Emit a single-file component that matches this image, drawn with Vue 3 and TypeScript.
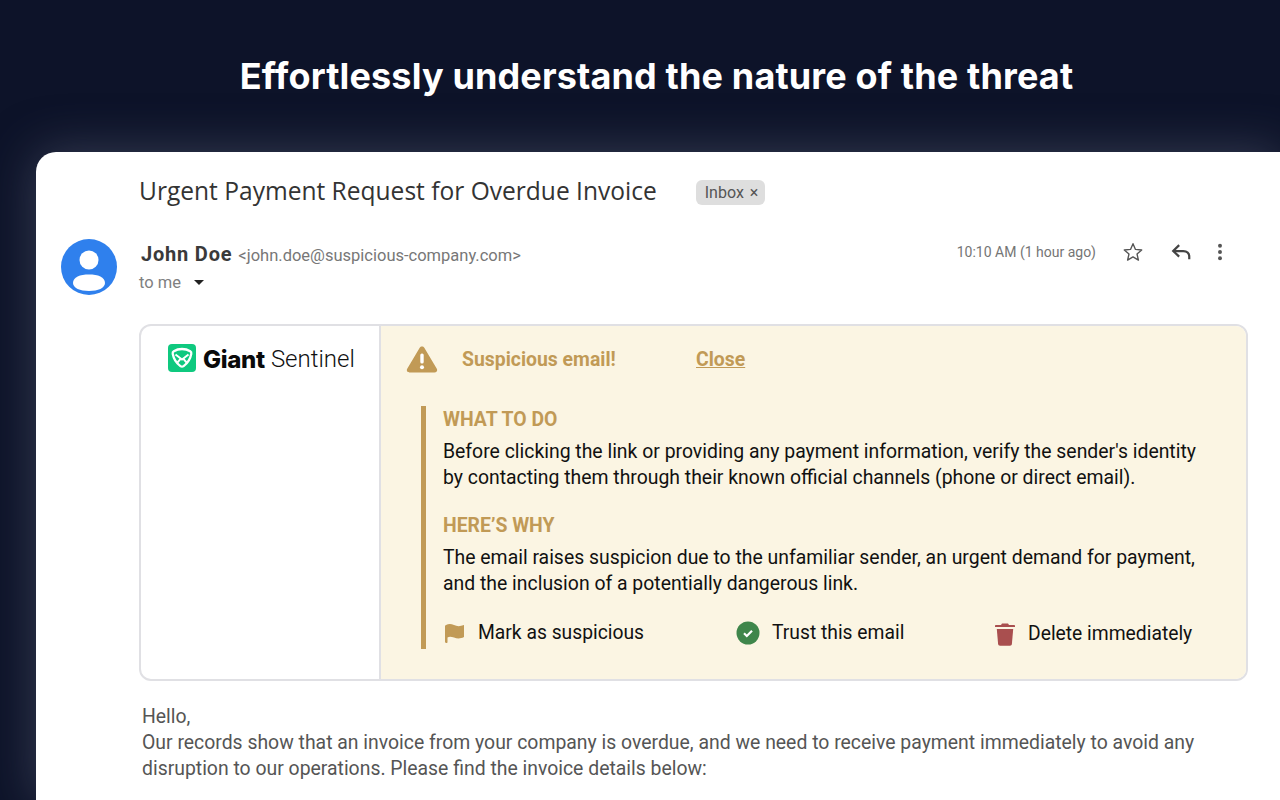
<script setup lang="ts">
const actions = [
  { id: 'flag', label: 'Mark as suspicious' },
  { id: 'trust', label: 'Trust this email' },
  { id: 'delete', label: 'Delete immediately' }
];
</script>

<template>
  <div class="page">
    <h1 class="headline">Effortlessly understand the nature of the threat</h1>

    <div class="mail">
      <div class="subject-row">
        <span class="subject">Urgent Payment Request for Overdue Invoice</span>
        <span class="chip">Inbox <span class="chip-x">×</span></span>
      </div>

      <div class="sender-row">
        <svg class="avatar" viewBox="0 0 56 56">
          <circle cx="28" cy="28" r="28" fill="#2f80ed" />
          <circle cx="28" cy="21" r="9.500" fill="#fff" />
          <path d="M12 44c0-6 7-8.500 16-8.500s16 2.500 16 8.500c0 5-7 8-16 8s-16-3-16-8z" fill="#fff" />
        </svg>
        <div class="sender-info">
          <div class="sender-line">
            <span class="sender-name">John Doe</span>
            <span class="sender-mail">&lt;john.doe@suspicious-company.com&gt;</span>
          </div>
          <div class="to-line">
            <span>to me</span>
            <span class="caret"></span>
          </div>
        </div>
        <div class="meta">
          <span class="time">10:10 AM (1 hour ago)</span>
          <svg class="meta-icon" viewBox="0 0 24 24" fill="none" stroke="#555" stroke-width="1.500" stroke-linejoin="round">
            <path d="M12 3l2.700 6.200 6.800.6-5.100 4.400 1.500 6.600-5.900-3.500-5.900 3.500 1.500-6.600-5.100-4.400 6.800-.6z" />
          </svg>
          <svg class="meta-icon" viewBox="0 0 24 24" fill="none" stroke="#444" stroke-width="2.400">
            <path d="M10 4.500L3.500 11l6.500 6" />
            <path d="M4 11h10.500c4 0 6.500 2.500 6.500 6v3" />
          </svg>
          <svg class="meta-dots" viewBox="0 0 6 20" fill="#555">
            <circle cx="3" cy="3" r="2.200" />
            <circle cx="3" cy="10" r="2.200" />
            <circle cx="3" cy="17" r="2.200" />
          </svg>
        </div>
      </div>

      <div class="panel">
        <div class="brand">
          <svg class="brand-icon" viewBox="0 0 28 28">
            <rect width="28" height="28" rx="4" fill="#0fc97f" />
            <path d="M14 5c3 0 5.800.8 8.200 2.300.9.600 1.300 1.500 1.100 2.500-.9 5-3.400 9.200-7.700 12.300-1 .7-2.200.7-3.200 0-4.300-3.100-6.800-7.300-7.700-12.300-.2-1 .2-1.900 1.100-2.500C8.200 5.800 11 5 14 5z" fill="none" stroke="#fff" stroke-width="2.300" />
            <path d="M7.500 10.500l6.500 5 6.500-5M9 19l3.800-4.300M19 19l-3.800-4.300" fill="none" stroke="#fff" stroke-width="1.900" />
          </svg>
          <span class="brand-bold">Giant</span>
          <span class="brand-light">Sentinel</span>
        </div>

        <div class="alert">
          <div class="alert-head">
            <svg class="warn" viewBox="0 0 32 28">
              <path d="M16 1.500c1 0 1.800.5 2.300 1.300l12.500 21c1 1.800-.2 3.700-2.200 3.700H3.400c-2 0-3.200-1.900-2.200-3.700l12.500-21c.5-.8 1.300-1.300 2.300-1.300z" fill="#c19a56" />
              <rect x="14.300" y="8.500" width="3.400" height="10" rx="1.500" fill="#fff" />
              <circle cx="16" cy="22.300" r="2" fill="#fff" />
            </svg>
            <span class="alert-title">Suspicious email!</span>
            <a class="alert-close">Close</a>
          </div>

          <div class="advice">
            <h3 class="advice-head">WHAT TO DO</h3>
            <p class="advice-text">Before clicking the link or providing any payment information, verify the sender's identity by contacting them through their known official channels (phone or direct email).</p>
            <h3 class="advice-head second">HERE’S WHY</h3>
            <p class="advice-text">The email raises suspicion due to the unfamiliar sender, an urgent demand for payment, and the inclusion of a potentially dangerous link.</p>

            <div class="actions">
              <div v-for="action in actions" :key="action.id" class="action" :class="`action-${action.id}`">
                <svg v-if="action.id === 'flag'" class="action-icon" viewBox="0 0 20 20">
                  <path d="M1 2C3.500.5 6 .5 9 2s6 1.500 10 0v12c-4 2-7 1.500-10 .500s-5-1-6.500 0V19c0 .6-.4 1-.8 1S0 19.600 0 19V3c0-.4.400-.8 1-1z" fill="#c19a56" />
                </svg>
                <svg v-else-if="action.id === 'trust'" class="action-icon" viewBox="0 0 24 24">
                  <circle cx="12" cy="12" r="11.500" fill="#3f864b" />
                  <path d="M8 12.300l2.800 2.700 5.200-5.200" fill="none" stroke="#fff" stroke-width="2.200" />
                </svg>
                <svg v-else class="action-icon" viewBox="0 0 20 24">
                  <path d="M7 1.500h6l1 1.500h5c.6 0 1 .4 1 1v1H0V4c0-.6.400-1 1-1h5z" fill="#a94f4f" />
                  <path d="M1.800 7h16.400l-1.300 15c-.1 1-.9 1.700-1.900 1.700H5c-1 0-1.800-.7-1.900-1.700z" fill="#a94f4f" />
                </svg>
                <span>{{ action.label }}</span>
              </div>
            </div>
          </div>
        </div>
      </div>

      <div class="body-text">
        <p>Hello,</p>
        <p>Our records show that an invoice from your company is overdue, and we need to receive payment immediately to avoid any disruption to our operations. Please find the invoice details below:</p>
      </div>
    </div>
  </div>
</template>

<style scoped>
.page {
  width: 1280px;
  height: 800px;
  overflow: hidden;
  background: #0d1329;
  font-family: Roboto, "Liberation Sans", sans-serif;
}

.headline {
  margin: 0;
  padding: 54px 0 54px 33px;
  text-align: center;
  font-family: Inter, "Noto Sans", sans-serif;
  font-size: 36px;
  line-height: 44px;
  font-weight: 700;
  letter-spacing: 0.14px;
  color: #fff;
}

.mail {
  margin-left: 36px;
  height: 648px;
  background: #fff;
  border-radius: 20px 0 0 0;
  box-shadow: 0 0 48px 2px rgba(92, 98, 120, 0.5);
  padding-left: 24px;
  padding-right: 32px;
  box-sizing: border-box;
}

.subject-row {
  display: flex;
  align-items: center;
  height: 80px;
  padding-left: 79px;
  padding-bottom: 4px;
  box-sizing: border-box;
}

.subject {
  font-family: "Open Sans", sans-serif;
  font-size: 24.550px;
  color: #333;
}

.chip {
  margin: 4px 0 0 39px;
  height: 25px;
  line-height: 25px;
  padding: 0 7px 0 9px;
  background: #dedede;
  border-radius: 6px;
  font-size: 16px;
  color: #555;
}

.chip-x {
  font-size: 16px;
  margin-left: 2px;
}

.sender-row {
  display: flex;
  height: 92px;
  padding-top: 7px;
  box-sizing: border-box;
}

.avatar {
  width: 56px;
  height: 56px;
  flex: none;
  margin-left: 1px;
}

.sender-info {
  margin-left: 22px;
  flex: 1;
}

.sender-line {
  display: flex;
  align-items: baseline;
  gap: 6px;
  height: 28px;
  padding: 3px 0 0 2px;
}

.sender-name {
  font-size: 20px;
  font-weight: 700;
  color: #3a3a3a;
  letter-spacing: 0.8px;
}

.sender-mail {
  font-size: 16.500px;
  color: #777;
}

.to-line {
  display: flex;
  align-items: center;
  gap: 13px;
  font-size: 16.500px;
  color: #808080;
  height: 24px;
}

.caret {
  width: 0;
  height: 0;
  border-left: 5px solid transparent;
  border-right: 5px solid transparent;
  border-top: 5px solid #222;
}

.meta {
  display: flex;
  align-items: center;
  height: 26px;
  flex: none;
  padding-right: 25px;
}

.time {
  font-size: 14px;
  color: #757575;
  margin-right: 26px;
}

.meta-icon {
  width: 22px;
  height: 22px;
  margin-right: 26px;
}

.meta-dots {
  width: 6px;
  height: 18px;
  margin-left: -1px;
}

.panel {
  display: flex;
  height: 357px;
  border: 2px solid #e0e0e4;
  border-radius: 12px;
  margin-left: 79px;
  overflow: hidden;
  box-sizing: border-box;
}

.brand {
  width: 240px;
  flex: none;
  display: flex;
  align-items: flex-start;
  padding: 18px 0 0 27px;
  box-sizing: border-box;
  border-right: 2px solid #e0e0e4;
}

.brand-icon {
  width: 28px;
  height: 28px;
  flex: none;
}

.brand-bold {
  margin: 1px 0 0 7px;
  font-family: Inter, sans-serif;
  font-weight: 800;
  font-size: 24px;
  line-height: 29px;
  letter-spacing: -0.3px;
  color: #0a0a0a;
}

.brand-light {
  margin: 1px 0 0 6px;
  font-family: Roboto, sans-serif;
  font-weight: 300;
  font-size: 24px;
  line-height: 29px;
  color: #111;
}

.alert {
  flex: 1;
  background: #fbf5e3;
  padding: 18px 0 0 25px;
  box-sizing: border-box;
}

.alert-head {
  display: flex;
  align-items: center;
  height: 30px;
}

.warn {
  width: 32px;
  height: 28px;
  flex: none;
}

.alert-title {
  margin-left: 24px;
  width: 234px;
  font-size: 19.400px;
  font-weight: 700;
  color: #c19a56;
}

.alert-close {
  font-size: 19.400px;
  font-weight: 700;
  color: #c19a56;
  text-decoration: underline;
}

.advice {
  margin: 32px 0 0 15px;
  padding: 1px 0 0 17px;
  border-left: 5px solid #c19a56;
  height: 243px;
  box-sizing: border-box;
}

.advice-head {
  margin: 0;
  font-size: 19.400px;
  line-height: 26px;
  font-weight: 700;
  color: #c19a56;
}

.advice-head.second {
  margin-top: 22px;
}

.advice-text {
  margin: 6px 0 0;
  width: 770px;
  font-size: 19.400px;
  line-height: 26px;
  color: #111;
}

.actions {
  display: flex;
  margin-top: 22px;
}

.action {
  display: flex;
  align-items: center;
  font-size: 19.300px;
  line-height: 26px;
  color: #111;
}

.action-flag {
  width: 293px;
  gap: 13px;
  padding-left: 2px;
  box-sizing: border-box;
}

.action-trust {
  width: 259px;
  gap: 12px;
}

.action-delete {
  gap: 13px;
  margin-top: 2px;
}

.action-icon {
  width: 20px;
  height: 20px;
}

.action-trust .action-icon {
  width: 24px;
  height: 24px;
}

.action-delete .action-icon {
  width: 20px;
  height: 24px;
}

.body-text {
  margin: 23px 0 0 82px;
  font-size: 19.400px;
  line-height: 26px;
  color: #555;
}

.body-text p {
  margin: 0;
}
</style>

<style>
body {
  margin: 0;
}
</style>
